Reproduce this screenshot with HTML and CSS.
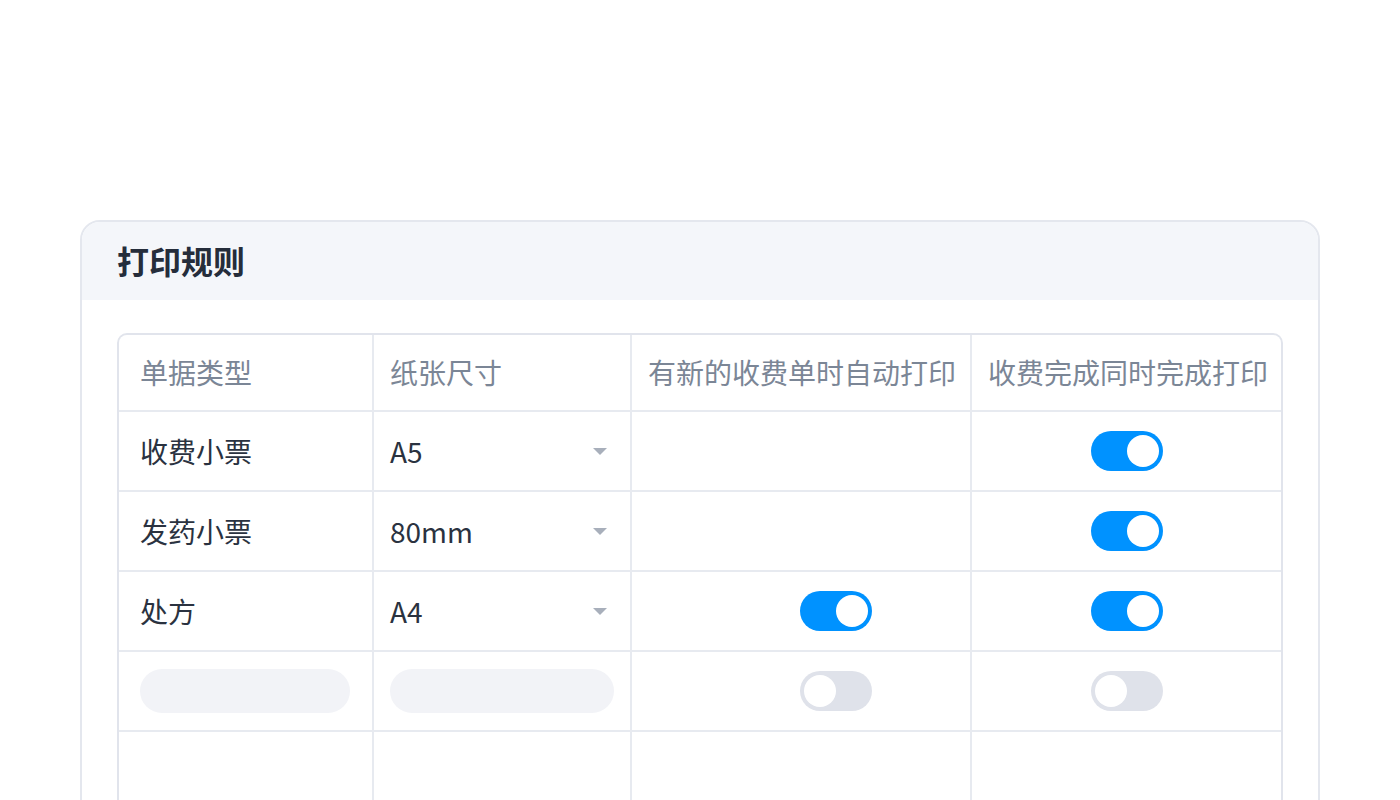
FILE: index.html
```html
<!DOCTYPE html>
<html>
<head>
	<meta charset="utf-8">
	<title>打印规则</title>
<link rel="stylesheet" href="styles.css">
</head>

<body>

<div class="card">
<div class="card_head">打印规则</div>
<div class="card_body">
<div class="grid">
	<div class="cell th first">单据类型</div>
	<div class="cell th">纸张尺寸</div>
	<div class="cell th">有新的收费单时自动打印</div>
	<div class="cell th">收费完成同时完成打印</div>

	<div class="cell first">收费小票</div>
	<div class="cell sel">A5<span class="caret"></span></div>
	<div class="cell sw3"></div>
	<div class="cell sw4"><span class="toggle on"><span class="knob"></span></span></div>

	<div class="cell first">发药小票</div>
	<div class="cell sel">80mm<span class="caret"></span></div>
	<div class="cell sw3"></div>
	<div class="cell sw4"><span class="toggle on"><span class="knob"></span></span></div>

	<div class="cell first">处方</div>
	<div class="cell sel">A4<span class="caret"></span></div>
	<div class="cell sw3"><span class="toggle on"><span class="knob"></span></span></div>
	<div class="cell sw4"><span class="toggle on"><span class="knob"></span></span></div>

	<div class="cell first"><span class="pill pill_type"></span></div>
	<div class="cell"><span class="pill pill_size"></span></div>
	<div class="cell sw3"><span class="toggle"><span class="knob"></span></span></div>
	<div class="cell sw4"><span class="toggle"><span class="knob"></span></span></div>

	<div class="cell first"></div>
	<div class="cell"></div>
	<div class="cell"></div>
	<div class="cell"></div>
</div>
</div>
</div>

</body>

</html>
```

FILE: styles.css
```css
body {
	margin: 0;
	background-color: #fff;
	font-family: "Noto Sans CJK SC", sans-serif;
	overflow: hidden;
}

.card {
	margin: 220px 0 0 80px;
	width: 1236px;
	height: 640px;

	border: #e4e7ee 2px solid;
	border-radius: 20px 20px 0 0;
	overflow: hidden;
}

.card_head {
	height: 78px;
	padding-left: 35px;

	background-color: #f4f6fa;

	font-size: 32px;
	font-weight: bold;
	line-height: 76px;
	color: #252d3b;
}

.card_body {
	padding: 33px 35px 0 35px;
}

.grid {
	display: grid;
	grid-template-columns: 253px 256px 338px 310px;
	grid-template-rows: 75px 78px 78px 78px 78px 80px;
	gap: 2px;

	background-color: #e7eaf0;
	border: #e1e4ec 2px solid;
	border-radius: 10px;
	overflow: hidden;
}

.cell {
	display: flex;
	align-items: center;
	padding: 0 16px;

	background-color: #fff;

	font-size: 28px;
	color: #2a3240;
	white-space: nowrap;
}

.cell.first {
	padding-left: 21px;
}

.cell.th {
	color: #7b8696;
	padding-bottom: 2px;
}

.cell.sel {
	justify-content: space-between;
	padding-right: 23px;
}

.caret {
	width: 0;
	height: 0;
	border-left: 7px solid transparent;
	border-right: 7px solid transparent;
	border-top: 7px solid #a8afbb;
}

.sw3 {
	padding-left: 168px;
}

.sw4 {
	justify-content: center;
}

.toggle {
	display: inline-flex;
	width: 72px;
	height: 40px;
	padding: 4px;
	box-sizing: border-box;

	background-color: #dfe2ea;
	border-radius: 20px;
}

.toggle.on {
	background-color: #0092ff;
	justify-content: flex-end;
}

.knob {
	width: 32px;
	height: 32px;
	border-radius: 50%;
	background-color: #fff;
}

.pill {
	display: inline-block;
	height: 44px;
	border-radius: 22px;
	background-color: #f2f3f7;
}

.pill_type {
	width: 210px;
}

.pill_size {
	width: 225px;
}
```
